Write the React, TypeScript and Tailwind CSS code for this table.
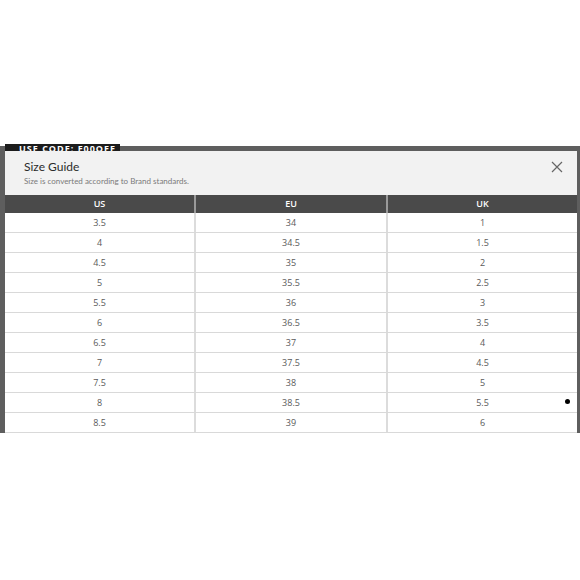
const rows: [string, string, string][] = [
  ['3.5', '34', '1'],
  ['4', '34.5', '1.5'],
  ['4.5', '35', '2'],
  ['5', '35.5', '2.5'],
  ['5.5', '36', '3'],
  ['6', '36.5', '3.5'],
  ['6.5', '37', '4'],
  ['7', '37.5', '4.5'],
  ['7.5', '38', '5'],
  ['8', '38.5', '5.5'],
  ['8.5', '39', '6'],
];

export default function App() {
  return (
    <div className="w-[580px] h-[580px] bg-white overflow-hidden" style={{ fontFamily: '"Open Sans", "Liberation Sans", sans-serif' }}>
      <div className="h-[146px]" />

      {/* page behind the overlay */}
      <div className="relative bg-[#5e5e5e] pt-[5px] pl-[5px] pr-[3px]">
        {/* promo banner peeking out above the modal */}
        <div className="absolute left-[5px] top-[-2px] w-[115px] h-[7px] bg-[#1c1c1c] overflow-hidden">
          <div className="whitespace-nowrap text-white font-bold text-[9px] leading-[9px] tracking-[1px] pl-[14px]">USE CODE: F00OFF</div>
        </div>

        {/* modal */}
        <div className="relative bg-white">
          <div className="h-[44px] bg-[#f2f2f2] flex items-start justify-between pl-[19px] pr-[14px] pt-[8px]">
            <div>
              <div className="text-[12px] leading-[15px] text-[#2b2b2b]" style={{ fontFamily: 'Lato, "Open Sans", sans-serif' }}>Size Guide</div>
              <div className="text-[8px] leading-[12px] text-[#7a7a7a] mt-[1px]" style={{ fontFamily: 'Lato, "Open Sans", sans-serif' }}>Size is converted according to Brand standards.</div>
            </div>
            <svg width="12" height="12" viewBox="0 0 12 12" className="mt-[2px]">
              <path d="M1 1 L11 11 M11 1 L1 11" stroke="#666" strokeWidth="1.2" fill="none" />
            </svg>
          </div>

          <div className="grid grid-cols-[191px_192px_1fr] h-[18px] bg-[#4a4a4a] text-white text-[9px] font-semibold">
            <div className="flex items-center justify-center border-r-2 border-[#9a9a9a]">US</div>
            <div className="flex items-center justify-center border-r-2 border-[#9a9a9a]">EU</div>
            <div className="flex items-center justify-center">UK</div>
          </div>

          {rows.map((r, i) => (
            <div key={i} className="grid grid-cols-[191px_192px_1fr] h-[20px] border-b border-[#d9d9d9] text-[9px] text-[#5a5a5a]">
              <div className="flex items-center justify-center border-r-2 border-[#dcdcdc]">{r[0]}</div>
              <div className="flex items-center justify-center border-r-2 border-[#dcdcdc]">{r[1]}</div>
              <div className="flex items-center justify-center">{r[2]}</div>
            </div>
          ))}

          {/* cursor dot */}
          <div className="absolute left-[560px] top-[248px] w-[5px] h-[5px] rounded-full bg-black" />
        </div>
      </div>
    </div>
  );
}
